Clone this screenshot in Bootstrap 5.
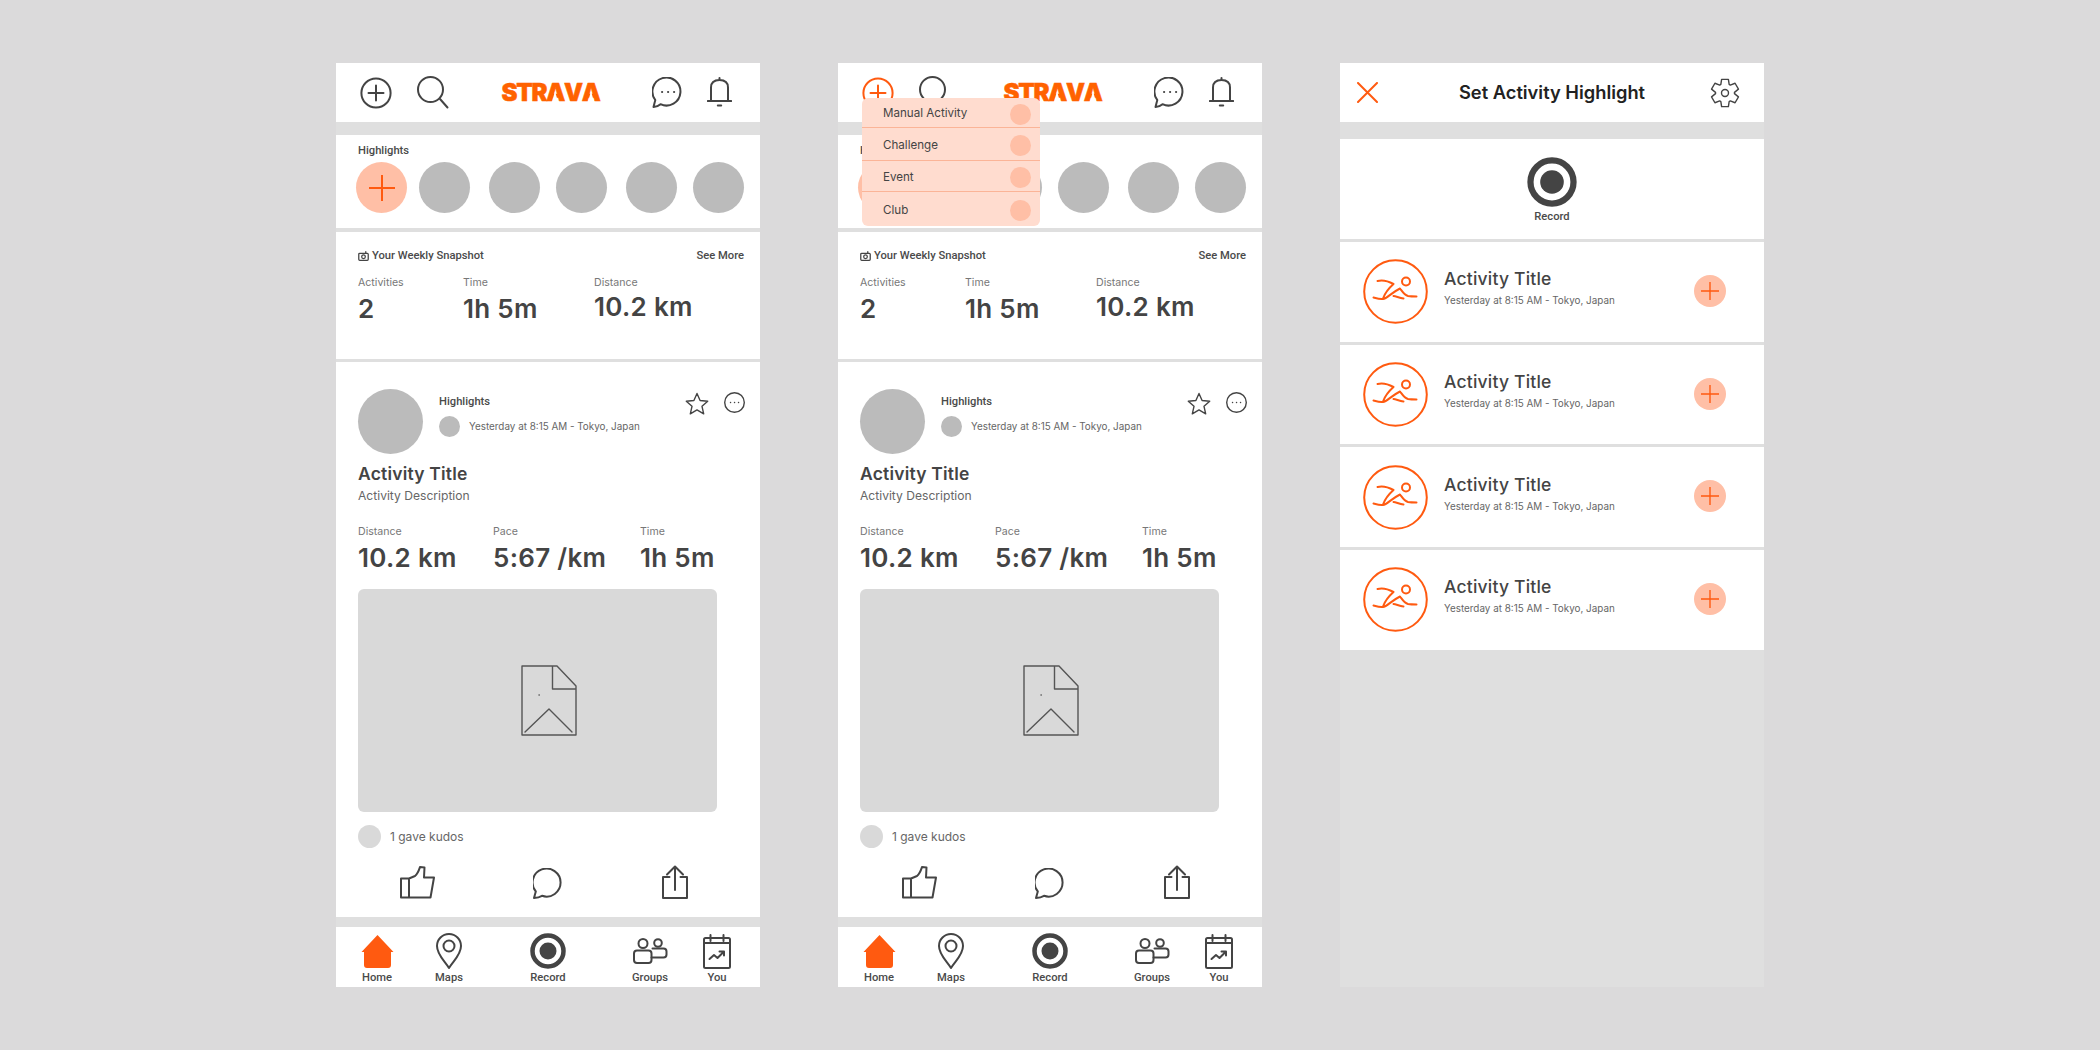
<!DOCTYPE html>
<html lang="en">
<head>
    <meta charset="UTF-8">
    <meta name="viewport" content="width=device-width, initial-scale=1.0">
    <title>Strava wireframes</title>
    <link href="https://cdn.jsdelivr.net/npm/bootstrap@5.3.3/dist/css/bootstrap.min.css" rel="stylesheet">
    <style>
        body { background-color: #dbdadb; font-family: "Inter", "Liberation Sans", sans-serif; color: #444; }
        .phones { gap: 78px; padding-top: 63px; }
        .phone { width: 424px; height: 924px; background: #dfdfdf; position: relative; }
        .ico { fill: none; stroke: #444; stroke-width: 2; stroke-linecap: round; stroke-linejoin: round; display: block; flex: none; }
        .ico-thin { stroke-width: 1.4; }
        .ico-grey { stroke: #555; }
        .ico-or { stroke: #ff5a10; }

        .top-bar { height: 59px; padding: 0 28px 0 24px; }
        .left-icons { gap: 25px; }
        .right-icons { gap: 24px; }
        .strava-logo { font-family: "Inter", sans-serif; font-weight: 900; font-size: 24px; letter-spacing: -1.3px; color: #ff6200; line-height: 1; -webkit-text-stroke: .5px #ff6200; }
        .logo-a { position: relative; display: inline-block; }
        .logo-a::after { content: ""; position: absolute; left: 50%; bottom: 3px; transform: translateX(-50%); border-left: 3.500px solid transparent; border-right: 3.500px solid transparent; border-bottom: 11px solid #fff; }
        .roboto-lbl { font-family: "Roboto", sans-serif; font-weight: 500; font-size: 11.2px; line-height: 16px; color: #4a4a4a; }

        .hl-box { height: 93px; margin-top: 13px; padding: 8px 16px 0 20px; }
        .hl-label { padding-left: 2px; }
        .hl-row { display: grid; grid-template-columns: 63px 70px 67px 70px 67px 51px; margin-top: 3px; }
        .dot-big { width: 51px; height: 51px; background: #bbb; }
        .dot-add { background: #ffbfa6; }

        .week-box { height: 127px; margin-top: 4px; padding: 16px 16px 0 22px; }
        .week-head { gap: 3px; }
        .week-stats { display: grid; grid-template-columns: 105px 131px 1fr; margin-top: 11px; }
        .post-stats { display: grid; grid-template-columns: 135px 147px 1fr; margin-top: 19px; }
        .stat-lbl { font-size: 10.6px; line-height: 16px; color: #777; }
        .stat-val { font-size: 26px; line-height: 30px; font-weight: 600; color: #444; letter-spacing: .3px; margin-top: 3px; white-space: nowrap; }
        .stat-up { margin-top: 1px; }

        .post-box { height: 555px; margin-top: 3px; padding: 27px 15px 0 22px; }
        .avatar-lg { width: 65px; height: 65px; background: #bbb; flex: none; }
        .avatar-sm { width: 21px; height: 21px; background: #bbb; flex: none; }
        .post-meta { padding: 5px 0 0 16px; }
        .meta-line { gap: 9px; margin-top: 6px; }
        .meta-txt { font-size: 9.900px; color: #666; }
        .post-tools { gap: 15px; padding-top: 3px; }
        .post-title { font-size: 17.5px; line-height: 24px; font-weight: 600; margin-top: 8px; letter-spacing: .2px; color: #444; }
        .post-desc { font-size: 12.1px; line-height: 18px; margin-top: 1px; color: #666; }
        .post-img { width: 359px; height: 223px; background: #d9d9d9; margin-top: 16px; padding-left: 22px; border-radius: 6px; }
        .kudos { gap: 9px; margin-top: 13px; }
        .kudos-dot { width: 23px; height: 23px; background: #d9d9d9; }
        .kudos-txt { font-size: 12px; color: #666; }
        .post-acts { gap: 98px; padding-left: 42px; margin-top: 17px; }

        .nav-bar { height: 60px; margin-top: 10px; padding-left: 11px; display: grid; grid-template-columns: 60px 84px 114px 90px 44px; }
        .nav-cell { height: 60px; }
        .nav-ico { height: 43px; padding-top: 5px; }

        .add-menu { position: absolute; left: 24px; top: 35px; width: 178px; height: 128px; background: #ffdccf; border-radius: 6px; display: grid; grid-template-rows: 30px 33px 31px 34px; }
        .menu-row { padding: 3px 9px 0 21px; font-size: 11.6px; color: #444; border-bottom: 1px solid #fbb497; }
        .menu-row:last-child { border-bottom: 0; }
        .menu-dot { width: 21px; height: 21px; background: #ffbfa6; }

        .set-title { font-size: 18.300px; font-weight: 600; color: #222; }
        .set-bar { display: grid; grid-template-columns: 1fr auto 1fr; align-items: center; padding: 0 17px; }
        .gear-ico { margin-right: 7px; }
        .rec-box { height: 100px; margin-top: 17px; padding-top: 18px; }
        .rec-box .roboto-lbl { margin-top: 2px; }
        .act-row { height: 99.700px; margin-top: 3px; padding: 0 38px 0 23px; }
        .act-info { padding: 0 0 8px 16px; }
        .act-title { font-size: 17.5px; line-height: 24px; font-weight: 500; letter-spacing: .2px; color: #444; }
        .act-sub { font-size: 9.900px; line-height: 16px; color: #666; margin-top: 1px; }
        .plus-btn { width: 32px; height: 32px; background: #ffbfa6; margin-bottom: 2px; }
    </style>
</head>
<body>
    <svg width="0" height="0" class="position-absolute">
        <symbol id="i-plus" viewBox="0 0 32 32"><circle cx="16" cy="16" r="14.6"/><path d="M16 8.5v15M8.5 16h15"/></symbol>
        <symbol id="i-search" viewBox="0 0 32 33"><circle cx="13.500" cy="13.500" r="12.500"/><path d="M23 23l7.500 8.500"/></symbol>
        <symbol id="i-chat" viewBox="0 0 31 31"><path d="M1.5 30l1.8-7A14 14 0 1 1 8.5 27.2C6.5 29 4 29.800 1.500 30z"/><path d="M10 15h.2M16 15h.2M22 15h.2"/></symbol>
        <symbol id="i-bell" viewBox="0 0 25 31"><path d="M4 23.500V10.500C4 5.500 7.500 3 12.500 3S21 5.500 21 10.500V23.500M.8 24h23.400M12.500 1v2M10.800 28.500h3.400"/></symbol>
        <symbol id="i-cam" viewBox="0 0 12 11"><rect x=".8" y="2.500" width="10.400" height="7.700" rx="1"/><circle cx="6" cy="6.300" r="2"/><path d="M8.500.8v1.500"/></symbol>
        <symbol id="i-star" viewBox="0 0 24 24"><path d="M12 1.500l3.100 7 7.600.8-5.700 5 1.700 7.500-6.700-3.900-6.700 3.900 1.700-7.500-5.700-5 7.600-.8z"/></symbol>
        <symbol id="i-more" viewBox="0 0 21 21"><circle cx="10.500" cy="10.500" r="9.800"/><path d="M6.500 10.500h.1M10.500 10.500h.1M14.500 10.500h.1"/></symbol>
        <symbol id="i-doc" viewBox="0 0 56 71"><path d="M1 1h35l19 20v49H1zM31.500 1v23H55M4 67l24-23 23 23M18 30h.3"/></symbol>
        <symbol id="i-thumb" viewBox="0 0 35 33"><path d="M1 31.500V12.500H9L15 10C18 7.500 19 4 20 1L24.500 1.500 24 11.500H34L30.500 31.500zM9 12.500v19"/></symbol>
        <symbol id="i-bubble" viewBox="0 0 31 31"><path d="M1 30l1.800-6.500A14 14 0 1 1 9 27.800C7 29 4 29.800 1 30z"/></symbol>
        <symbol id="i-share" viewBox="0 0 26 34"><path d="M7.500 12H1v21h24V12h-6.500M13 25V1.500M5 9.500L13 1.500l8 8"/></symbol>
        <symbol id="i-map" viewBox="0 0 26 36"><path d="M13 35C9 28 1 22 1 13a12 12 0 0 1 24 0c0 9-8 15-12 22z"/><circle cx="13" cy="13" r="5.500"/></symbol>
        <symbol id="i-rec" viewBox="0 0 36 36"><circle cx="18" cy="18" r="15.500" stroke-width="4.500"/><circle cx="18" cy="18" r="8.500" fill="#444" stroke="none"/></symbol>
        <symbol id="i-group" viewBox="0 0 35 26"><circle cx="25" cy="5" r="3.800"/><path d="M18.500 19.500h12a3 3 0 0 0 3-3v-3a3 3 0 0 0-3-3h-11"/><circle cx="10" cy="5.500" r="4.500"/><rect x="1" y="12.500" width="17.500" height="12.500" rx="3"/></symbol>
        <symbol id="i-cal" viewBox="0 0 28 35"><rect x="1" y="4" width="26" height="30" rx="1.500"/><path d="M1 9h26M7.500 1v6M20.500 1v6M6.500 25l4.500-4 3.500 3 6-6M16.500 17.500h4.500v4"/></symbol>
        <symbol id="i-swim" viewBox="0 0 65 65"><circle cx="32.500" cy="32.500" r="31.300"/><circle cx="43" cy="22.500" r="4"/><path d="M14.500 22C20 20.500 25 22 30.500 25 26 29 22 34 20 39.500M10.500 38.500C14 39.500 17 40.500 20 40C24 39.500 28 34 37 29.500 39 32 41 36 45 37 48 37.500 51 37.500 53.500 37.500M30.500 37C33 37 36 39 40.500 39.500"/></symbol>
        <symbol id="i-x" viewBox="0 0 21 21"><path d="M1 1l19 19M20 1L1 20"/></symbol>
        <symbol id="i-cross" viewBox="0 0 26 26"><path d="M13 0v26M0 13h26"/></symbol>
    </svg>

    <div class="phones d-flex justify-content-center">
        <div class="phone d-flex flex-column" id="feedA"></div>
        <div class="phone d-flex flex-column" id="feedB"></div>
        <div class="phone d-flex flex-column">
            <div class="top-bar set-bar bg-white">
                <svg class="ico ico-or" width="21" height="21"><use href="#i-x"/></svg>
                <h1 class="set-title mb-0">Set Activity Highlight</h1>
                <svg class="ico ico-thin gear-ico ms-auto" width="30" height="30" viewBox="-15 -15 30 30"><polygon id="gearShape"/><circle r="3.500"/></svg>
            </div>
            <div class="rec-box bg-white d-flex flex-column align-items-center">
                <svg class="ico" width="50" height="50"><use href="#i-rec"/></svg>
                <div class="roboto-lbl">Record</div>
            </div>
            <div id="actRows"></div>
        </div>
    </div>

    <script>
        const ico = (name, w, h, extra = '') => `<svg class="ico ${extra}" width="${w}" height="${h}"><use href="#i-${name}"/></svg>`;
        const stat = (label, val, up) => `<div><div class="stat-lbl">${label}</div><div class="stat-val ${up ? 'stat-up' : ''}">${val}</div></div>`;
        const navItem = (icon, label) => `<div class="nav-cell d-flex flex-column align-items-center"><div class="nav-ico d-flex align-items-center">${icon}</div><div class="roboto-lbl">${label}</div></div>`;

        const homeIcon = `<svg width="33" height="33" viewBox="0 0 33 33" class="d-block"><path fill="#ff5a10" d="M16.500 0L32.500 17H30V30a3 3 0 0 1-3 3H6a3 3 0 0 1-3-3V17H.5z"/></svg>`;

        function feedHtml(menu) {
            const circles = [1, 2, 3, 4, 5].map(() => '<div class="dot-big rounded-circle"></div>').join('');
            return `
            <div class="top-bar bg-white d-flex align-items-center justify-content-between">
                <div class="left-icons d-flex align-items-center">${ico('plus', 32, 32, menu ? 'ico-or' : '')}${ico('search', 32, 33)}</div>
                <div class="strava-logo">STR<span class="logo-a">A</span>V<span class="logo-a">A</span></div>
                <div class="right-icons d-flex align-items-center">${ico('chat', 31, 31)}${ico('bell', 25, 31)}</div>
            </div>
            <div class="hl-box bg-white">
                <div class="roboto-lbl hl-label">Highlights</div>
                <div class="hl-row">
                    <div class="dot-big dot-add rounded-circle d-flex align-items-center justify-content-center">${ico('cross', 26, 26, 'ico-or')}</div>
                    ${circles}
                </div>
            </div>
            <div class="week-box bg-white">
                <div class="d-flex align-items-center justify-content-between">
                    <div class="roboto-lbl week-head d-flex align-items-center">${ico('cam', 11, 10, 'ico-thin')}Your Weekly Snapshot</div>
                    <div class="roboto-lbl">See More</div>
                </div>
                <div class="week-stats">${stat('Activities', '2')}${stat('Time', '1h 5m')}${stat('Distance', '10.2 km', true)}</div>
            </div>
            <div class="post-box bg-white">
                <div class="d-flex">
                    <div class="avatar-lg rounded-circle"></div>
                    <div class="post-meta flex-grow-1">
                        <div class="roboto-lbl">Highlights</div>
                        <div class="meta-line d-flex align-items-center"><div class="avatar-sm rounded-circle"></div><span class="meta-txt">Yesterday at 8:15 AM - Tokyo, Japan</span></div>
                    </div>
                    <div class="post-tools d-flex align-items-start">${ico('star', 24, 24, 'ico-thin')}${ico('more', 21, 21, 'ico-thin')}</div>
                </div>
                <div class="post-title">Activity Title</div>
                <div class="post-desc">Activity Description</div>
                <div class="post-stats">${stat('Distance', '10.2 km')}${stat('Pace', '5:67 /km')}${stat('Time', '1h 5m')}</div>
                <div class="post-img d-flex align-items-center justify-content-center">${ico('doc', 56, 71, 'ico-thin ico-grey')}</div>
                <div class="kudos d-flex align-items-center"><div class="kudos-dot rounded-circle"></div><span class="kudos-txt">1 gave kudos</span></div>
                <div class="post-acts d-flex align-items-end">${ico('thumb', 35, 33)}${ico('bubble', 31, 31)}${ico('share', 26, 34)}</div>
            </div>
            <div class="nav-bar bg-white">
                ${navItem(homeIcon, 'Home')}
                ${navItem(ico('map', 26, 36), 'Maps')}
                ${navItem(ico('rec', 36, 36), 'Record')}
                ${navItem(ico('group', 35, 26), 'Groups')}
                ${navItem(ico('cal', 28, 35), 'You')}
            </div>
            ${menu ? `<div class="add-menu">${['Manual Activity', 'Challenge', 'Event', 'Club'].map(m =>
                `<div class="menu-row d-flex align-items-center justify-content-between"><span>${m}</span><span class="menu-dot rounded-circle"></span></div>`).join('')}</div>` : ''}`;
        }

        document.getElementById('feedA').innerHTML = feedHtml(false);
        document.getElementById('feedB').innerHTML = feedHtml(true);

        document.getElementById('actRows').innerHTML = [1, 2, 3, 4].map(() => `
            <div class="act-row bg-white d-flex align-items-center">
                ${ico('swim', 65, 65, 'ico-or')}
                <div class="act-info flex-grow-1">
                    <div class="act-title">Activity Title</div>
                    <div class="act-sub">Yesterday at 8:15 AM - Tokyo, Japan</div>
                </div>
                <div class="plus-btn rounded-circle d-flex align-items-center justify-content-center">${ico('cross', 18, 18, 'ico-or')}</div>
            </div>`).join('');

        // six-tooth cog for the settings button
        const pts = [];
        for (let i = 0; i < 6; i++) {
            const a = i * 60 - 90;
            [[9.500, -26], [14, -14], [14, 14], [9.500, 26]].forEach(([r, d]) => {
                const t = (a + d) * Math.PI / 180;
                pts.push((r * Math.cos(t)).toFixed(2) + ',' + (r * Math.sin(t)).toFixed(2));
            });
        }
        document.getElementById('gearShape').setAttribute('points', pts.join(' '));
    </script>
    <script src="https://cdn.jsdelivr.net/npm/bootstrap@5.3.3/dist/js/bootstrap.bundle.min.js"></script>
</body>
</html>
